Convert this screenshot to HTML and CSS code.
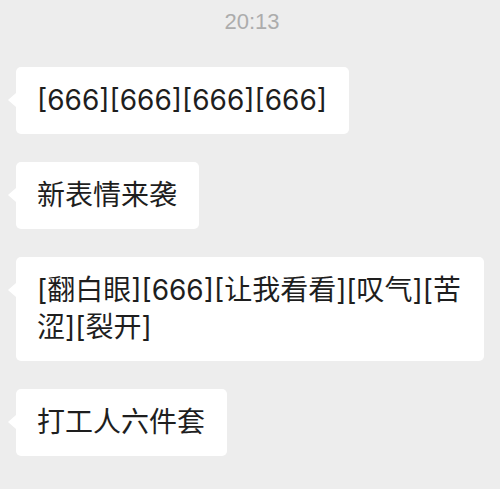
FILE: index.html
```html
<!DOCTYPE html>
<html>

<head>
    <meta charset="utf-8">
    <link rel="stylesheet" href="styles.css">
</head>

<body>
    <div class="chat">
        <div class="time">20:13</div>
        <div class="msg">
            <div class="bubble">[666][666][666][666]</div>
        </div>
        <div class="msg">
            <div class="bubble">新表情来袭</div>
        </div>
        <div class="msg">
            <div class="bubble wide">[翻白眼][666][让我看看][叹气][苦涩][裂开]</div>
        </div>
        <div class="msg">
            <div class="bubble">打工人六件套</div>
        </div>
    </div>
</body>

</html>
```
FILE: styles.css
```css
* {
    box-sizing: border-box;
}

body {
    margin: 0;
    background-color: #ededed;
    font-family: Inter, "Noto Sans CJK SC", sans-serif;
}

.chat {
    display: flex;
    flex-direction: column;
    padding: 8px 16px 0 16px;
}

.time {
    align-self: center;
    margin-left: 4px;
    font-family: "Liberation Sans", sans-serif;
    font-size: 22px;
    color: #acacac;
    line-height: 27px;
    margin-bottom: 32px;
}

.msg {
    display: flex;
    margin-bottom: 28px;
}

.bubble {
    position: relative;
    background-color: #fff;
    border-radius: 5px;
    padding: 15px 22px 15px 21px;
    font-size: 28px;
    line-height: 37px;
    color: #1e1e1e;
}

.bubble::before {
    content: "";
    position: absolute;
    left: -8px;
    top: 26px;
    border-top: 7px solid transparent;
    border-bottom: 7px solid transparent;
    border-right: 8px solid #fff;
}

.wide {
    width: 468px;
}
```
